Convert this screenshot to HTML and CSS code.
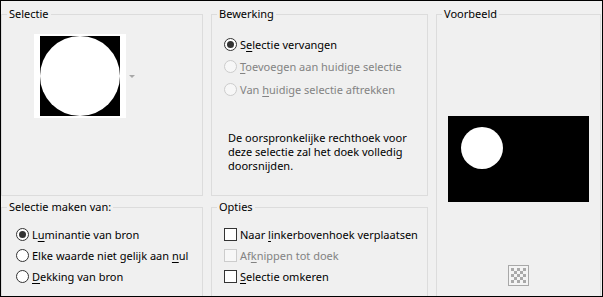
FILE: index.html
```html
<!DOCTYPE html>
<html lang="nl">

<head>
    <meta charset="UTF-8">
    <meta name="viewport" content="width=device-width, initial-scale=1.0">
    <link rel="stylesheet" href="styles.css">
</head>

<body>
    <div class="dialog">
        <section class="group group-selection">
            <span class="legend">Selectie</span>
            <div class="thumb-row">
                <div class="thumb">
                    <div class="thumb-canvas"><div class="thumb-disc"></div></div>
                </div>
                <span class="drop-arrow"></span>
            </div>
        </section>

        <section class="group group-edit">
            <span class="legend">Bewerking</span>
            <div class="options">
                <label class="option"><span class="radio checked"></span><span>S<u>e</u>lectie vervangen</span></label>
                <label class="option disabled"><span class="radio"></span><span><u>T</u>oevoegen aan huidige selectie</span></label>
                <label class="option disabled"><span class="radio"></span><span>Van <u>h</u>uidige selectie aftrekken</span></label>
            </div>
            <p class="note">De oorspronkelijke rechthoek voor<br>deze selectie zal het doek volledig<br>doorsnijden.</p>
        </section>

        <section class="group group-preview">
            <span class="legend">Voorbeeld</span>
            <div class="preview">
                <div class="preview-disc"></div>
            </div>
            <svg class="checker" width="21" height="21" viewBox="0 0 21 21">
                <rect x="0.5" y="0.5" width="20" height="20" fill="#f4f4f4" stroke="#a8a8a8" />
                <g fill="#a9a9a9">
                    <rect x="3" y="3" width="3" height="3" /><rect x="9" y="3" width="3" height="3" /><rect x="15" y="3" width="3" height="3" />
                    <rect x="6" y="6" width="3" height="3" /><rect x="12" y="6" width="3" height="3" />
                    <rect x="3" y="9" width="3" height="3" /><rect x="9" y="9" width="3" height="3" /><rect x="15" y="9" width="3" height="3" />
                    <rect x="6" y="12" width="3" height="3" /><rect x="12" y="12" width="3" height="3" />
                    <rect x="3" y="15" width="3" height="3" /><rect x="9" y="15" width="3" height="3" /><rect x="15" y="15" width="3" height="3" />
                </g>
            </svg>
        </section>

        <section class="group group-source">
            <span class="legend">Selectie maken van:</span>
            <div class="options compact">
                <label class="option"><span class="radio checked"></span><span>L<u>u</u>minantie van bron</span></label>
                <label class="option"><span class="radio"></span><span>Elke waarde niet gelijk aan <u>n</u>ul</span></label>
                <label class="option"><span class="radio"></span><span><u>D</u>ekking van bron</span></label>
            </div>
        </section>

        <section class="group group-options">
            <span class="legend">Opties</span>
            <div class="options compact">
                <label class="option"><span class="check"></span><span>Naar <u>l</u>inkerbovenhoek verplaatsen</span></label>
                <label class="option disabled"><span class="check"></span><span>Af<u>k</u>nippen tot doek</span></label>
                <label class="option"><span class="check"></span><span><u>S</u>electie omkeren</span></label>
            </div>
        </section>
    </div>
</body>

</html>
```

FILE: styles.css
```css
html,
body {
    margin: 0;
    background-color: #f0f0f0;
}

body {
    font-family: "Noto Sans", "Open Sans", sans-serif;
    font-size: 11px;
    color: #000;
}

p {
    margin: 0;
}

.dialog {
    box-sizing: border-box;
    width: 603px;
    height: 297px;
    border: 1px solid #000;
    overflow: hidden;
    display: grid;
    grid-template-columns: 202px 217px 165px;
    grid-template-rows: 182px 120px;
    column-gap: 8px;
    row-gap: 11px;
    padding: 13px 0 0 0;
}

.group {
    position: relative;
    border: 1px solid #dcdcdc;
}

.legend {
    position: absolute;
    top: -9px;
    left: 5px;
    padding: 0 2px;
    line-height: 16px;
    background-color: #f0f0f0;
    white-space: nowrap;
}

/* Selectie */
.group-selection {
    padding: 19px 0 0 32px;
}

.thumb-row {
    display: flex;
    align-items: center;
    gap: 3px;
}

.thumb {
    background-color: #fff;
    padding: 2px 6px;
}

.thumb-canvas {
    width: 80px;
    height: 80px;
    background-color: #000;
}

.thumb-disc {
    width: 80px;
    height: 80px;
    border-radius: 50%;
    background-color: #fff;
}

.drop-arrow {
    width: 0;
    height: 0;
    border-left: 3px solid transparent;
    border-right: 3px solid transparent;
    border-top: 3px solid #a8a8a8;
}

/* options lists */
.options {
    display: flex;
    flex-direction: column;
}

.option {
    display: flex;
    align-items: center;
    gap: 3px;
    height: 22.5px;
    white-space: nowrap;
}

.option.disabled {
    color: #838383;
}

.option u {
    text-underline-offset: 2px;
}

.radio,
.check {
    box-sizing: border-box;
    width: 13px;
    height: 13px;
    flex: none;
    border: 1px solid #333;
    background-color: #fff;
    position: relative;
}

.radio {
    border-radius: 50%;
}

.radio.checked::after {
    content: "";
    position: absolute;
    left: 2px;
    top: 2px;
    width: 7px;
    height: 7px;
    border-radius: 50%;
    background-color: #333;
}

.disabled .radio,
.disabled .check {
    border-color: #ccc;
    background-color: #f7f7f7;
}

.group-edit {
    padding: 18px 0 0 12px;
}

.note {
    margin: 30px 0 0 4px;
    line-height: 14px;
}

.group-source {
    padding: 16px 0 0 14px;
}

.group-options {
    padding: 16px 0 0 12px;
}

.compact .option {
    height: 21px;
}

/* Voorbeeld */
.group-preview {
    grid-row: 1 / 3;
    grid-column: 3;
    display: flex;
    flex-direction: column;
    align-items: center;
}

.preview {
    margin-top: 101px;
    width: 141px;
    height: 86px;
    background-color: #000;
    display: flex;
    padding: 11px 0 0 13px;
    box-sizing: border-box;
}

.preview-disc {
    width: 42px;
    height: 42px;
    border-radius: 50%;
    background-color: #fff;
}

.checker {
    margin-top: 63px;
    display: block;
}
```
